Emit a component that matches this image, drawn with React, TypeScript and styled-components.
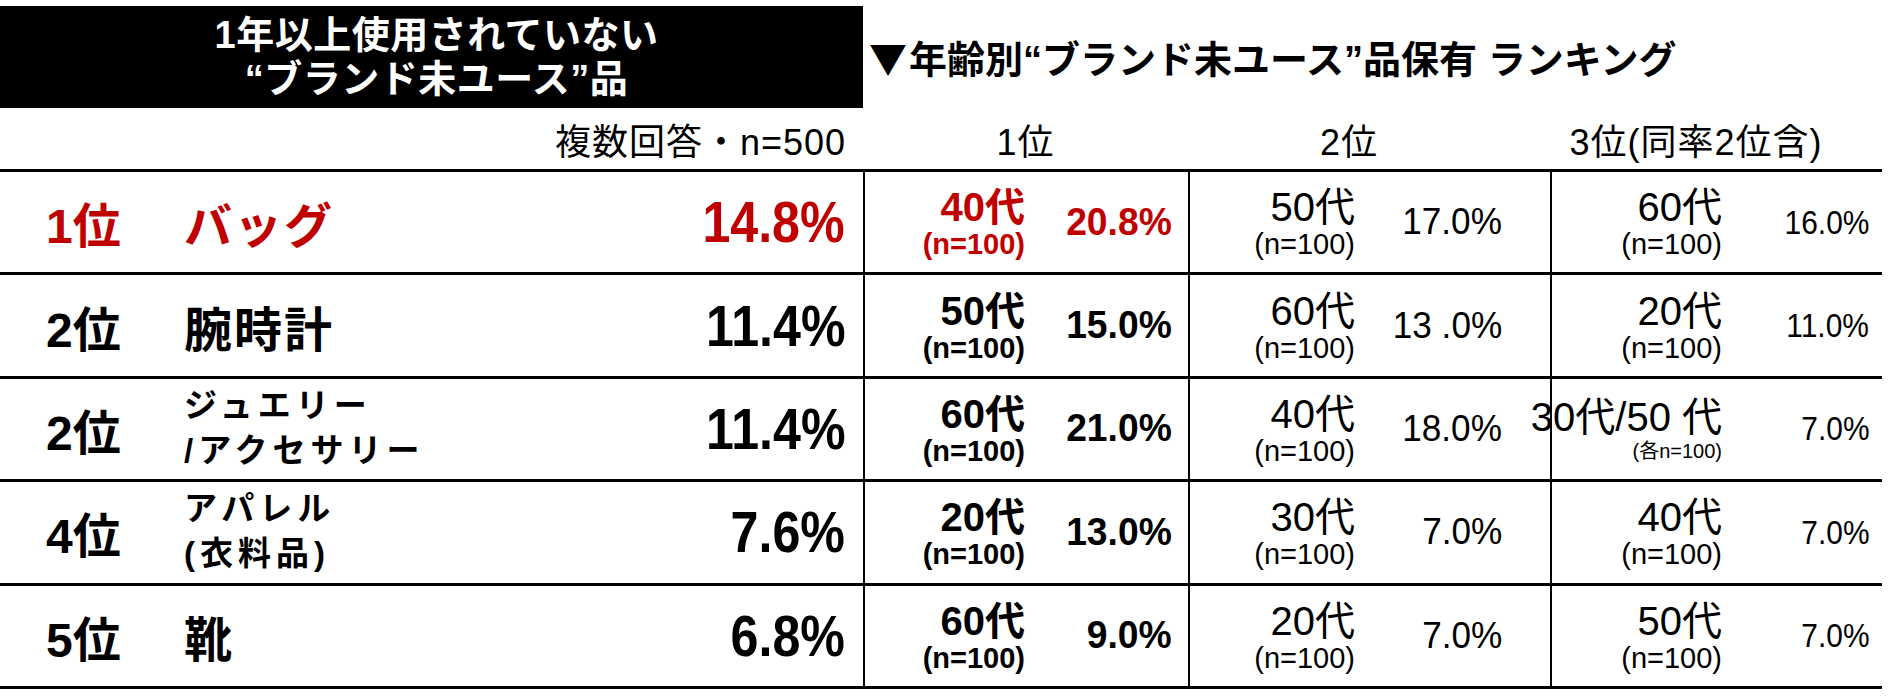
import React from 'react';
import styled, { createGlobalStyle } from 'styled-components';

type AgeEntry = {
  age: string;
  n: string;
  pct: string;
  small?: boolean;
};

type RankingRow = {
  rank: string;
  name: string[];
  total: string;
  entries: AgeEntry[];
  highlight?: boolean;
};

const COLUMNS = '863px 325px 362px 332px';
const RED = '#c00000';

const rows: RankingRow[] = [
  {
    rank: '1位',
    name: ['バッグ'],
    total: '14.8%',
    highlight: true,
    entries: [
      { age: '40代', n: '(n=100)', pct: '20.8%' },
      { age: '50代', n: '(n=100)', pct: '17.0%' },
      { age: '60代', n: '(n=100)', pct: '16.0%' }
    ]
  },
  {
    rank: '2位',
    name: ['腕時計'],
    total: '11.4%',
    entries: [
      { age: '50代', n: '(n=100)', pct: '15.0%' },
      { age: '60代', n: '(n=100)', pct: '13 .0%' },
      { age: '20代', n: '(n=100)', pct: '11.0%' }
    ]
  },
  {
    rank: '2位',
    name: ['ジュエリー', '/アクセサリー'],
    total: '11.4%',
    entries: [
      { age: '60代', n: '(n=100)', pct: '21.0%' },
      { age: '40代', n: '(n=100)', pct: '18.0%' },
      { age: '30代/50 代', n: '(各n=100)', pct: '7.0%', small: true }
    ]
  },
  {
    rank: '4位',
    name: ['アパレル', '(衣料品)'],
    total: '7.6%',
    entries: [
      { age: '20代', n: '(n=100)', pct: '13.0%' },
      { age: '30代', n: '(n=100)', pct: '7.0%' },
      { age: '40代', n: '(n=100)', pct: '7.0%' }
    ]
  },
  {
    rank: '5位',
    name: ['靴'],
    total: '6.8%',
    entries: [
      { age: '60代', n: '(n=100)', pct: '9.0%' },
      { age: '20代', n: '(n=100)', pct: '7.0%' },
      { age: '50代', n: '(n=100)', pct: '7.0%' }
    ]
  }
];

// per ranking column: left padding, weight, pct size and squeeze
const columnStyle = [
  { pad: 20, weight: 700, pct: 38, squeeze: 0.98 },
  { pad: 25, weight: 400, pct: 37, squeeze: 0.95 },
  { pad: 30, weight: 400, pct: 34, squeeze: 0.88 }
];

const App: React.FC = () => (
  <Page>
    <GlobalStyle />
    <TopBar>
      <TitleBox>
        <span>1年以上使用されていない</span>
        <span>“ブランド未ユース”品</span>
      </TitleBox>
      <RankingTitle>
        <Triangle>▼</Triangle>年齢別“ブランド未ユース”品保有 ランキング
      </RankingTitle>
    </TopBar>

    <HeaderRow>
      <HeaderLabel $align="right" $pr={17}>
        複数回答・n=500
      </HeaderLabel>
      <HeaderLabel $align="center">1位</HeaderLabel>
      <HeaderLabel $align="center" $pr={40}>
        2位
      </HeaderLabel>
      <HeaderLabel $align="center" $pr={40}>
        3位(同率2位含)
      </HeaderLabel>
    </HeaderRow>

    <Table>
      {rows.map((row, i) => (
        <Row key={i}>
          <ItemCell $red={row.highlight}>
            <Rank>{row.rank}</Rank>
            {row.name.length > 1 ? (
              <NameSmall>
                {row.name.map(line => (
                  <span key={line}>{line}</span>
                ))}
              </NameSmall>
            ) : (
              <Name>{row.name[0]}</Name>
            )}
            <Total>
              <Narrow $scale={0.88}>{row.total}</Narrow>
            </Total>
          </ItemCell>
          {row.entries.map((entry, j) => {
            const col = columnStyle[j];
            const red = row.highlight && j === 0;
            return (
              <AgeCell key={j} $pad={col.pad} $red={red}>
                <AgeBlock $weight={col.weight}>
                  <Age>{entry.age}</Age>
                  <Sample $small={entry.small}>{entry.n}</Sample>
                </AgeBlock>
                <Pct $weight={col.weight} $size={col.pct}>
                  <Narrow $scale={col.squeeze}>{entry.pct}</Narrow>
                </Pct>
              </AgeCell>
            );
          })}
        </Row>
      ))}
    </Table>
  </Page>
);

const GlobalStyle = createGlobalStyle`
  html, body {
    margin: 0;
    padding: 0;
    background: #fff;
  }
  body {
    font-family: 'Liberation Sans', 'Noto Sans CJK JP', sans-serif;
    color: #000;
  }
`;

const Page = styled.div`
  width: 1882px;
`;

const TopBar = styled.div`
  display: grid;
  grid-template-columns: 863px 1fr;
  height: 108px;
`;

const TitleBox = styled.div`
  display: flex;
  flex-direction: column;
  align-items: center;
  justify-content: center;
  margin-top: 6px;
  background: #000;
  color: #fff;
  font-size: 38px;
  font-weight: 700;
  line-height: 44px;
  letter-spacing: 0.5px;
  padding-left: 10px;
`;

const RankingTitle = styled.div`
  align-self: center;
  padding-left: 6px;
  padding-top: 4px;
  font-size: 38px;
  font-weight: 700;
  white-space: nowrap;
`;

const Triangle = styled.span`
  font-family: 'Noto Sans CJK JP', sans-serif;
  margin-right: 2px;
`;

const HeaderRow = styled.div`
  display: grid;
  grid-template-columns: ${COLUMNS};
  align-items: center;
  height: 61px;
`;

const HeaderLabel = styled.div<{ $align: 'left' | 'center' | 'right'; $pr?: number }>`
  text-align: ${p => p.$align};
  padding-right: ${p => p.$pr ?? 0}px;
  font-size: 36px;
  font-weight: 400;
  letter-spacing: 1px;
  white-space: nowrap;
`;

const Table = styled.div`
  border-top: 3px solid #000;
`;

const Row = styled.div`
  display: grid;
  grid-template-columns: ${COLUMNS};
  height: 100.4px;
  border-bottom: 3px solid #000;
`;

const ItemCell = styled.div<{ $red?: boolean }>`
  display: grid;
  grid-template-columns: 138px 1fr auto;
  align-items: center;
  padding: 0 18px 0 46px;
  color: ${p => (p.$red ? RED : '#000')};
`;

const Rank = styled.div`
  font-size: 48px;
  font-weight: 700;
`;

const Name = styled.div`
  font-size: 48px;
  font-weight: 700;
  letter-spacing: 2px;
`;

const NameSmall = styled.div`
  display: flex;
  flex-direction: column;
  font-size: 33px;
  font-weight: 700;
  line-height: 45px;
  letter-spacing: 5px;
  margin-top: -2px;
`;

const Total = styled.div`
  font-size: 57px;
  font-weight: 700;
  text-align: right;
`;

// the source face is a narrow one: squeeze the glyphs, keep the right edge
const Narrow = styled.span<{ $scale: number }>`
  display: inline-block;
  transform: scaleX(${p => p.$scale});
  transform-origin: right center;
`;

const AgeCell = styled.div<{ $pad: number; $red?: boolean }>`
  display: grid;
  grid-template-columns: 140px 147px;
  align-items: center;
  padding-left: ${p => p.$pad}px;
  border-left: 2px solid #000;
  color: ${p => (p.$red ? RED : '#000')};
`;

const AgeBlock = styled.div<{ $weight: number }>`
  display: flex;
  flex-direction: column;
  align-items: flex-end;
  font-weight: ${p => p.$weight};
  white-space: nowrap;
`;

const Age = styled.span`
  font-size: 40px;
  line-height: 44px;
`;

const Sample = styled.span<{ $small?: boolean }>`
  font-size: ${p => (p.$small ? 20 : 29)}px;
  line-height: ${p => (p.$small ? 24 : 30)}px;
`;

const Pct = styled.div<{ $weight: number; $size: number }>`
  text-align: right;
  font-size: ${p => p.$size}px;
  font-weight: ${p => p.$weight};
  white-space: nowrap;
`;

export default App;
